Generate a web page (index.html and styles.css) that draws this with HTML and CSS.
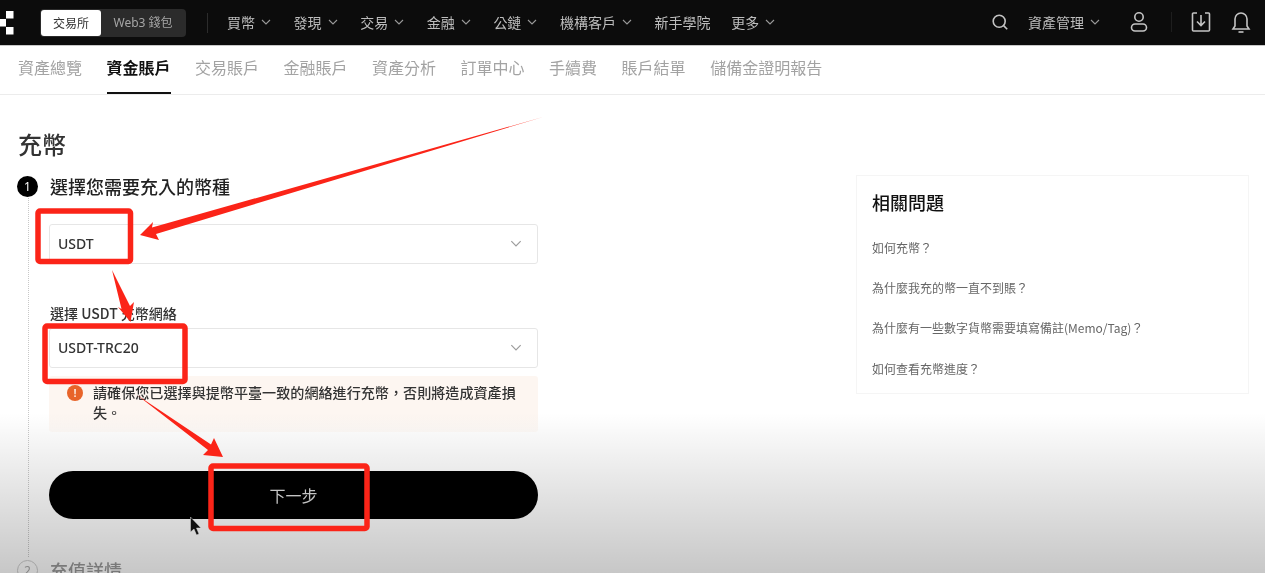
FILE: index.html
```html
<!DOCTYPE html>
<html lang="zh-Hant">
<head>
<meta charset="utf-8">
<title>充幣</title>
<link rel="stylesheet" href="styles.css">
</head>
<body>
<div class="page">
  <header class="topbar">
    <svg class="logo" width="14" height="24" viewBox="0 0 14 24"><rect x="6" y="0" width="7.500" height="7.500" fill="#fff"/><rect x="0" y="8" width="6" height="7.500" fill="#fff"/><rect x="6" y="16" width="7.500" height="7.500" fill="#fff"/></svg>
    <div class="switch"><span class="switch-on">交易所</span><span class="switch-off">Web3 錢包</span></div>
    <span class="vline first"></span>
    <nav class="mainnav">
      <a class="nav">買幣<svg class="chev" viewBox="0 0 10 6"><path d="M1 1l4 4 4-4"/></svg></a>
      <a class="nav">發現<svg class="chev" viewBox="0 0 10 6"><path d="M1 1l4 4 4-4"/></svg></a>
      <a class="nav">交易<svg class="chev" viewBox="0 0 10 6"><path d="M1 1l4 4 4-4"/></svg></a>
      <a class="nav">金融<svg class="chev" viewBox="0 0 10 6"><path d="M1 1l4 4 4-4"/></svg></a>
      <a class="nav">公鏈<svg class="chev" viewBox="0 0 10 6"><path d="M1 1l4 4 4-4"/></svg></a>
      <a class="nav">機構客戶<svg class="chev" viewBox="0 0 10 6"><path d="M1 1l4 4 4-4"/></svg></a>
      <a class="nav tight">新手學院</a>
      <a class="nav">更多<svg class="chev" viewBox="0 0 10 6"><path d="M1 1l4 4 4-4"/></svg></a>
    </nav>
    <div class="tools">
      <svg class="ico search" width="18" height="18" viewBox="0 0 18 18"><circle cx="8.200" cy="8.200" r="6"/><path d="M12.600 12.600l3.600 3.600"/></svg>
      <a class="nav assets">資產管理<svg class="chev" viewBox="0 0 10 6"><path d="M1 1l4 4 4-4"/></svg></a>
      <svg class="ico user" width="18" height="22" viewBox="0 0 18 22"><circle cx="9" cy="6" r="4.200"/><rect x="1.500" y="13" width="15" height="7" rx="3.500"/></svg>
      <span class="vline dim"></span>
      <svg class="ico dl" width="20" height="22" viewBox="0 0 20 22"><path d="M6 2H2.500a1 1 0 0 0-1 1v16a1 1 0 0 0 1 1h15a1 1 0 0 0 1-1V3a1 1 0 0 0-1-1H14"/><path d="M10 4v10M6 10.500l4 4 4-4"/></svg>
      <svg class="ico bell" width="20" height="24" viewBox="0 0 20 24"><path d="M4 16V9a6 6 0 0 1 12 0v7l2 3H2z"/><path d="M7.500 22h5"/></svg>
    </div>
  </header>

  <nav class="tabs">
    <a class="tab">資產總覽</a>
    <a class="tab active">資金賬戶</a>
    <a class="tab">交易賬戶</a>
    <a class="tab">金融賬戶</a>
    <a class="tab">資產分析</a>
    <a class="tab">訂單中心</a>
    <a class="tab">手續費</a>
    <a class="tab">賬戶結單</a>
    <a class="tab">儲備金證明報告</a>
  </nav>

  <main class="content">
    <section class="form">
      <h1 class="title">充幣</h1>
      <div class="step-head"><span class="num">1</span><h2 class="step-title">選擇您需要充入的幣種</h2></div>
      <div class="step-body">
        <div class="select">USDT<svg class="chev big" viewBox="0 0 10 6"><path d="M1 1l4 4 4-4"/></svg></div>
        <div class="label">選擇 USDT 充幣網絡</div>
        <div class="select tight-top">USDT-TRC20<svg class="chev big" viewBox="0 0 10 6"><path d="M1 1l4 4 4-4"/></svg></div>
        <div class="warn">
          <span class="warn-dot">!</span>
          <p class="warn-text">請確保您已選擇與提幣平臺一致的網絡進行充幣，否則將造成資產損失。</p>
        </div>
        <button class="next">下一步</button>
      </div>
      <div class="step-head muted"><span class="num off">2</span><h2 class="step-title">充值詳情</h2></div>
    </section>
    <aside class="side">
      <h3 class="side-title">相關問題</h3>
      <a class="faq">如何充幣？</a>
      <a class="faq">為什麼我充的幣一直不到賬？</a>
      <a class="faq">為什麼有一些數字貨幣需要填寫備註(Memo/Tag)？</a>
      <a class="faq">如何查看充幣進度？</a>
    </aside>
  </main>

  <div class="fade"></div>
  <svg class="marks" width="1265" height="573" viewBox="0 0 1265 573">
    <g fill="none" stroke="#fb2418" stroke-width="5.500" stroke-linejoin="round">
      <rect x="38" y="211" width="92.500" height="50.500" rx="2"/>
      <rect x="45" y="326" width="140" height="55.500" rx="2"/>
      <rect x="211" y="466" width="156" height="62.500" rx="2"/>
    </g>
    <g fill="#fb2418">
      <path d="M543 117L152 227.500 153 222 140 235 159 240 156 234z"/>
      <path d="M112 270L121.500 309 118 307 130.500 322 134 302 130 306z"/>
      <path d="M137 395L208 450 203 455 223 457 214 438 211 444.500z"/>
    </g>
    <path d="M190.500 517v15l3.500-3 2.500 6 2.500-1-2.500-6h4.500z" fill="#111" stroke="#ddd" stroke-width=".5"/>
  </svg>
</div>
</body>
</html>
```
FILE: styles.css
```css
* { box-sizing: border-box; }
html, body { margin: 0; padding: 0; }
body {
  width: 1265px;
  height: 573px;
  overflow: hidden;
  background: #fff;
  font-family: "Noto Sans CJK TC", "Noto Sans", sans-serif;
  color: #111;
}
.page { position: relative; width: 1265px; height: 573px; overflow: hidden; }
a { text-decoration: none; color: inherit; }
h1, h2, h3, p { margin: 0; }

.topbar, .tabs, .content { filter: blur(.4px); }

.topbar {
  display: flex;
  align-items: center;
  height: 46px;
  background: #0c0c0c;
  border-bottom: 1px solid #c9c9c9;
  color: #bdbdbd;
  font-size: 14px;
}
.logo { flex: none; margin: 0 26px 0 0; }
.switch {
  display: flex;
  width: 146px;
  height: 28px;
  background: #2b2b2b;
  border-radius: 4px;
  padding: 1px;
  font-size: 12px;
  line-height: 26px;
  text-align: center;
}
.switch-on { width: 60px; background: #fff; color: #333; border-radius: 3px; }
.switch-off { flex: 1; color: #a6a6a6; font-family: "Noto Sans", "Noto Sans CJK TC", sans-serif; }
.vline { flex: none; width: 1px; height: 20px; background: #2c2c2c; }
.vline.first { margin: 0 19px 0 21px; }
.vline.dim { background: #1e1e1e; margin: 0 19px 0 23px; }
.mainnav { display: flex; align-items: center; gap: 22.600px; padding-bottom: 2px; }
.nav { display: flex; align-items: center; gap: 6px; white-space: nowrap; line-height: 20px; }
.nav.tight { margin-right: -2px; }
.chev { width: 10px; height: 6px; flex: none; fill: none; stroke: #999; stroke-width: 1.1; }
.tools { display: flex; align-items: center; margin-left: auto; padding: 0 14px 2px 0; }
.ico { flex: none; fill: none; stroke: #c4c4c4; stroke-width: 1.6; }
.assets { margin: 0 30px 0 19px; }
.bell { margin-left: 20px; }

.tabs {
  display: flex;
  gap: 24.500px;
  height: 49px;
  padding-left: 18px;
  border-bottom: 1px solid #ececec;
  font-size: 16px;
  color: #a3a3a3;
}
.tab { line-height: 43px; height: 48px; white-space: nowrap; }
.tab.active { color: #111; font-weight: 700; border-bottom: 2px solid #111; }

.content { display: flex; justify-content: space-between; padding: 0 16px; }
.form { width: 522px; }
.title { margin: 33px 0 0 2px; font-size: 24px; line-height: 32px; font-weight: 500; color: #333; }
.step-head { display: flex; align-items: center; gap: 12px; margin-top: 14px; height: 24px; padding-left: 1px; }
.num {
  width: 21px; height: 21px; flex: none;
  border-radius: 50%;
  background: #000; color: #fff;
  font: 12px/21px "Noto Sans", sans-serif;
  text-align: center;
}
.step-title { font-size: 18px; line-height: 24px; font-weight: 500; color: #222; }
.step-body {
  margin-left: 12px;
  padding: 26px 0 38px 20px;
  border-left: 1px dotted #c8c8c8;
}
.select {
  display: flex;
  align-items: center;
  justify-content: space-between;
  height: 40px;
  padding: 0 15px 2px 8px;
  border: 1px solid #e6e6e6;
  border-radius: 3px;
  font: 500 14px "Noto Sans", "Noto Sans CJK TC", sans-serif;
  color: #333;
}
.chev.big { width: 12px; height: 7px; stroke: #9c9c9c; stroke-width: 1; }
.label { margin-top: 39px; padding-left: 1px; font-size: 14px; line-height: 20px; font-weight: 500; color: #333; }
.tight-top { margin-top: 5px; }
.warn {
  display: flex;
  gap: 10px;
  height: 56px;
  margin-top: 8px;
  padding: 6px 16px 0 18px;
  background: linear-gradient(to bottom, #fdf6f1 70%, #fefaf7);
  border-radius: 3px;
}
.warn-dot {
  width: 16px; height: 16px; flex: none; margin-top: 3px;
  border-radius: 50%;
  background: #e8642a; color: #fbe3d6;
  font: 700 11px/16px "Noto Sans", sans-serif;
  text-align: center;
}
.warn-text { font-size: 14.100px; line-height: 20px; font-weight: 500; color: #333; width: 445px; }
.next {
  display: block;
  width: 100%;
  height: 48px;
  margin-top: 39px;
  border: 0;
  border-radius: 24px;
  background: #000;
  color: #ddd;
  font: 16px "Noto Sans CJK TC", sans-serif;
}
.muted { margin-top: 1px; }
.muted .step-title { color: #999; }
.num.off { background: transparent; border: 1px solid #ccc; color: #aaa; line-height: 19px; }

.side {
  width: 393px;
  height: 219px;
  margin-top: 80px;
  padding: 14px 15px;
  border: 1px solid #f5f5f5;
}
.side-title { font-size: 18px; line-height: 24px; font-weight: 500; color: #111; }
.faq { display: block; margin-top: 20px; font-size: 12px; line-height: 20px; color: #666; white-space: nowrap; }
.side-title + .faq { margin-top: 24px; }
.faq:last-child { margin-top: 21px; }

.fade {
  position: absolute;
  left: 0; right: 0; bottom: 0;
  height: 160px;
  background: linear-gradient(to bottom, rgba(0,0,0,0), rgba(0,0,0,.22));
  pointer-events: none;
}
.marks { position: absolute; left: 0; top: 0; pointer-events: none; }
```
